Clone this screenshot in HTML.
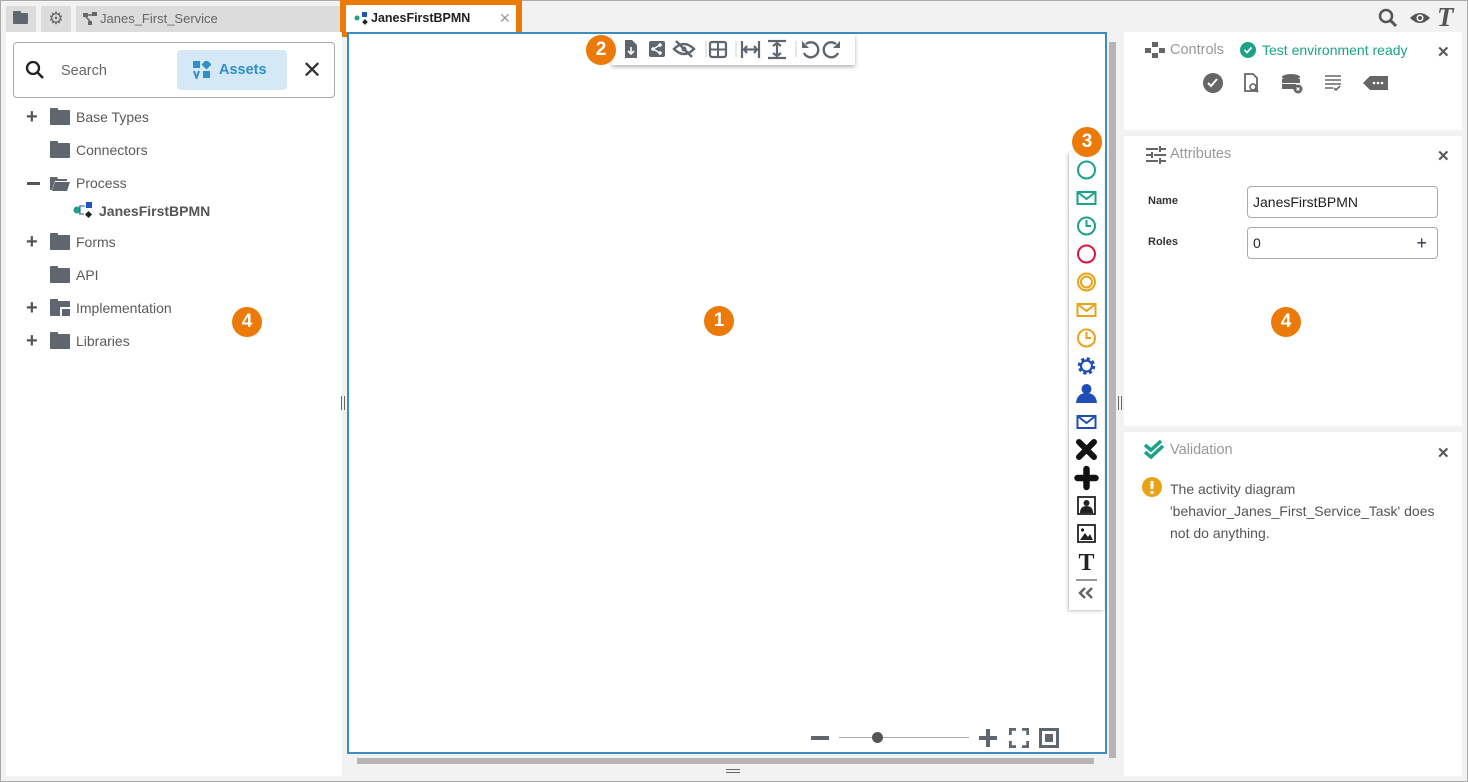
<!DOCTYPE html>
<html><head><meta charset="utf-8"><style>
*{box-sizing:border-box;margin:0;padding:0}
body{width:1468px;height:782px;overflow:hidden;background:#f2f2f2;font-family:"Liberation Sans",Arial,sans-serif;position:relative;color:#555}
.a{position:absolute}
.frame{left:0;top:0;width:1468px;height:782px;border:1px solid #aaa}
.badge{position:absolute;width:30px;height:30px;border-radius:50%;background:#ec7a08;color:#fff;font-weight:bold;font-size:19px;text-align:center;line-height:30px}
.tree{font-size:14px;color:#5a5a5a}
.row{position:absolute;left:0;height:20px;line-height:20px}
.fold{position:absolute;width:20px;height:15px;background:#5f6670;border-radius:1px}
.fold:before{content:"";position:absolute;left:0;top:-2px;width:8px;height:3px;background:#5f6670;border-radius:1px 1px 0 0}
.plus{position:absolute;font-size:20px;color:#555;font-weight:bold;line-height:20px}
.x{position:absolute;font-size:15px;color:#555;font-weight:bold}
</style></head><body>
<div class="a frame"></div>
<div class="a" style="left:6px;top:6px;width:30px;height:26px;background:#dcdcdc"></div>
<div class="fold" style="left:13px;top:13px;width:15px;height:11px"></div>
<div class="a" style="left:41px;top:6px;width:30px;height:26px;background:#dcdcdc;text-align:center;line-height:26px;font-size:17px;color:#666">⚙</div>
<div class="a" style="left:76px;top:6px;width:265px;height:26px;background:#dcdcdc;font-size:13px;line-height:26px;padding-left:24px;color:#666">Janes_First_Service</div>
<svg class="a" style="left:83px;top:12px" width="14" height="14"><rect x="0" y="1" width="5" height="4" fill="#666"/><rect x="9" y="0" width="5" height="4" fill="#666"/><rect x="5" y="9" width="4" height="4" fill="#666"/><path d="M5 3H9M3 5L7 9" stroke="#666" stroke-width="1.5"/></svg>
<div class="a" style="left:340px;top:0;width:182px;height:37px;background:#ec7a08"></div>
<div class="a" style="left:346px;top:5px;width:170px;height:27px;background:#fff;font-size:12.5px;font-weight:bold;color:#222;line-height:27px;padding-left:25px">JanesFirstBPMN</div>
<svg class="a" style="left:354px;top:12px" width="14" height="13"><circle cx="3" cy="6" r="2.5" fill="#1aa386"/><rect x="8" y="0" width="5" height="5" fill="#2255bb"/><rect x="9" y="8" width="4" height="4" fill="#222" transform="rotate(45 11 10)"/></svg>
<div class="a" style="left:499px;top:10px;font-size:14px;color:#999">✕</div>
<svg class="a" style="left:1378px;top:8px" width="22" height="20"><circle cx="8" cy="8" r="6" fill="none" stroke="#555" stroke-width="2.5"/><path d="M12 12L18 18" stroke="#555" stroke-width="3"/></svg>
<svg class="a" style="left:1409px;top:10px" width="22" height="16"><path d="M1 8Q11 -2 21 8Q11 18 1 8Z" fill="#555"/><circle cx="11" cy="8" r="3.5" fill="#fff"/><circle cx="11" cy="8" r="2" fill="#555"/></svg>
<div class="a" style="left:1437px;top:2px;font-family:'Liberation Serif',serif;font-style:italic;font-weight:bold;font-size:27px;color:#555">T</div>
<div class="a" style="left:6px;top:32px;width:336px;height:744px;background:#fff"></div>
<div class="a" style="left:13px;top:42px;width:322px;height:56px;border:1px solid #aaa;border-radius:4px;background:#fff"></div>
<svg class="a" style="left:25px;top:60px" width="22" height="22"><circle cx="8" cy="8" r="6" fill="none" stroke="#222" stroke-width="2.3"/><path d="M12.5 12.5L18 18" stroke="#222" stroke-width="2.5"/></svg>
<div class="a" style="left:61px;top:63px;font-size:14.5px;color:#666">Search</div>
<div class="a" style="left:177px;top:50px;width:110px;height:40px;background:#d4e9f5;border-radius:4px;color:#2f8fc6;font-size:14.5px;font-weight:bold;line-height:40px;padding-left:42px">Assets</div>
<svg class="a" style="left:193px;top:61px" width="18" height="18"><rect x="0" y="0" width="7" height="7" fill="#2f8fc6"/><rect x="10" y="0" width="7" height="7" fill="#2f8fc6" transform="rotate(45 13.5 3.5)"/><rect x="10" y="10" width="7" height="7" fill="#2f8fc6"/><path d="M1 10L3.5 17L6 10" stroke="#2f8fc6" stroke-width="2" fill="none"/></svg>
<div class="a" style="left:302px;top:56px;font-size:24px;color:#333">✕</div>
<div class="tree">
<div class="plus" style="left:26px;top:107px">+</div><div class="fold" style="left:50px;top:110px"></div><div class="row" style="left:76px;top:107px">Base Types</div>
<div class="fold" style="left:50px;top:143px"></div><div class="row" style="left:76px;top:140px">Connectors</div>
<div class="a" style="left:27px;top:182px;width:13px;height:2.5px;background:#555"></div>
<svg class="a" style="left:50px;top:175px" width="20" height="16"><path d="M0 2H7L8 4H17V6H5L2 15H0Z" fill="#5f6670"/><path d="M5 7H20L17 16H2Z" fill="#5f6670"/></svg>
<div class="row" style="left:76px;top:173px">Process</div>
<svg class="a" style="left:73px;top:201px" width="20" height="18"><circle cx="4" cy="9" r="3.5" fill="#1aa386"/><rect x="13" y="1" width="6" height="6" fill="#2255bb"/><rect x="13" y="11" width="5" height="5" fill="#222" transform="rotate(45 15.5 13.5)"/><path d="M6 5H12M6 13H11M7 5V13" stroke="#2255bb" stroke-width="1"/></svg>
<div class="row" style="left:99px;top:201px;font-weight:bold;color:#555">JanesFirstBPMN</div>
<div class="plus" style="left:26px;top:232px">+</div><div class="fold" style="left:50px;top:235px"></div><div class="row" style="left:76px;top:232px">Forms</div>
<div class="fold" style="left:50px;top:268px"></div><div class="row" style="left:76px;top:265px">API</div>
<div class="plus" style="left:26px;top:298px">+</div><div class="fold" style="left:50px;top:301px"></div><div class="a" style="left:60px;top:307px;width:10px;height:9px;background:#fff"></div><div class="a" style="left:62px;top:309px;width:8px;height:7px;background:#5f6670"></div><div class="row" style="left:76px;top:298px">Implementation</div>
<div class="plus" style="left:26px;top:331px">+</div><div class="fold" style="left:50px;top:334px"></div><div class="row" style="left:76px;top:331px">Libraries</div>
</div>
<div class="badge" style="left:232px;top:307px">4</div>
<div class="a" style="left:341px;top:396px;width:4px;height:14px;border-left:1.5px solid #666;border-right:1.5px solid #666"></div>
<div class="a" style="left:347px;top:32px;width:760px;height:722px;border:2px solid #3a8fc0;background:#fff"></div>
<div class="badge" style="left:704px;top:306px">1</div>
<div class="a" style="left:612px;top:34px;width:243px;height:31px;background:#fff;box-shadow:0 2px 4px rgba(0,0,0,.3)"></div>
<div class="badge" style="left:586px;top:35px">2</div>
<svg class="a" style="left:620px;top:38px" width="232" height="24" fill="#5f6670" stroke="#5f6670">
<path d="M5 2H12L17 7V20H5Z" stroke="none"/><path d="M11 9V16M8 13L11 16L14 13" stroke="#fff" stroke-width="1.6" fill="none"/>
<rect x="29" y="3" width="16" height="16" rx="2" stroke="none"/><circle cx="33" cy="11" r="1.8" fill="#fff" stroke="none"/><circle cx="40" cy="7" r="1.8" fill="#fff" stroke="none"/><circle cx="40" cy="15" r="1.8" fill="#fff" stroke="none"/><path d="M33 11L40 7M33 11L40 15" stroke="#fff" stroke-width="1.3"/>
<path d="M54 11Q64 1 74 11Q64 21 54 11Z" fill="none" stroke-width="2.4"/><circle cx="64" cy="11" r="2.5" stroke="none"/><path d="M56 3L72 19" stroke-width="2.4"/>
<line x1="86" y1="3" x2="86" y2="19" stroke="#ccc"/>
<rect x="90" y="4" width="16" height="15" rx="2" fill="none" stroke-width="2.2"/><path d="M98 4V19M90 11.5H106" stroke-width="2"/>
<line x1="116" y1="3" x2="116" y2="19" stroke="#ccc"/>
<path d="M122 3V20M139 3V20M124 11.5H137M127 8L124 11.5L127 15M134 8L137 11.5L134 15" stroke-width="2.2" fill="none"/>
<path d="M148 3H166M148 20H166M157 5V18M153 8L157 5L161 8M153 15L157 18L161 15" stroke-width="2.2" fill="none"/>
<line x1="176" y1="3" x2="176" y2="19" stroke="#ccc"/>
<path d="M186 6A7.5 7.5 0 1 1 184 15" fill="none" stroke-width="2.4"/><path d="M182 3V10H189Z" stroke="none"/>
<path d="M216 6A7.5 7.5 0 1 0 218 15" fill="none" stroke-width="2.4"/><path d="M220 3V10H213Z" stroke="none"/>
</svg>
<div class="a" style="left:1069px;top:152px;width:35px;height:458px;background:#fff;box-shadow:-1px 1px 3px rgba(0,0,0,.25)"></div>
<div class="badge" style="left:1072px;top:127px">3</div>
<svg class="a" style="left:1069px;top:155px" width="35" height="455">
<circle cx="17.5" cy="15" r="8.5" fill="none" stroke="#1aa386" stroke-width="2"/>
<rect x="8.5" y="37" width="18" height="12" fill="none" stroke="#1aa386" stroke-width="2"/><path d="M8.5 37L17.5 44L26.5 37" fill="none" stroke="#1aa386" stroke-width="2"/>
<circle cx="17.5" cy="71" r="8.5" fill="none" stroke="#1aa386" stroke-width="2"/><path d="M17.5 65V71H22" fill="none" stroke="#1aa386" stroke-width="2"/>
<circle cx="17.5" cy="99" r="8.5" fill="none" stroke="#e0123f" stroke-width="2"/>
<circle cx="17.5" cy="127" r="8.5" fill="none" stroke="#e8a317" stroke-width="2"/><circle cx="17.5" cy="127" r="5.5" fill="none" stroke="#e8a317" stroke-width="2"/>
<rect x="8.5" y="149" width="18" height="12" fill="none" stroke="#e8a317" stroke-width="2"/><path d="M8.5 149L17.5 156L26.5 149" fill="none" stroke="#e8a317" stroke-width="2"/>
<circle cx="17.5" cy="183" r="8.5" fill="none" stroke="#e8a317" stroke-width="2"/><path d="M17.5 177V183H22" fill="none" stroke="#e8a317" stroke-width="2"/>
<circle cx="17.5" cy="211" r="7" fill="none" stroke="#1f4fb5" stroke-width="3.5" stroke-dasharray="3 2.5"/><circle cx="17.5" cy="211" r="5.5" fill="none" stroke="#1f4fb5" stroke-width="2.2"/>
<circle cx="17.5" cy="234" r="5" fill="#1f4fb5"/><path d="M7 248Q8 238 17.5 238Q27 238 28 248Z" fill="#1f4fb5"/>
<rect x="8.5" y="261" width="18" height="12" fill="none" stroke="#1f4fb5" stroke-width="2"/><path d="M8.5 261L17.5 268L26.5 261" fill="none" stroke="#1f4fb5" stroke-width="2"/>
<path d="M10 287L25 302M25 287L10 302" stroke="#111" stroke-width="6" stroke-linecap="round"/>
<path d="M17.5 314V332M8.5 323H26.5" stroke="#111" stroke-width="6.5" stroke-linecap="round"/>
<rect x="9" y="342" width="17" height="17" fill="none" stroke="#222" stroke-width="1.8"/><circle cx="17.5" cy="348" r="3" fill="#222"/><path d="M11 358Q11 351 17.5 351Q24 351 24 358Z" fill="#222"/>
<rect x="9" y="370" width="17" height="17" fill="none" stroke="#222" stroke-width="1.8"/><circle cx="13.5" cy="375" r="1.6" fill="#222"/><path d="M11 385L16 378L19 382L21 379L24 385Z" fill="#222"/>
<text x="17.5" y="415" text-anchor="middle" font-family="Liberation Serif" font-weight="bold" font-size="24" fill="#222">T</text>
<line x1="7" y1="425" x2="28" y2="425" stroke="#333"/>
<path d="M16 433L11 438L16 443M23 433L18 438L23 443" fill="none" stroke="#666" stroke-width="2.5"/>
</svg>
<div class="a" style="left:811px;top:736px;width:18px;height:4px;background:#5f6670"></div>
<div class="a" style="left:839px;top:737px;width:130px;height:1px;background:#aaa"></div>
<div class="a" style="left:872px;top:732px;width:11px;height:11px;border-radius:50%;background:#555"></div>
<div class="a" style="left:979px;top:736px;width:18px;height:4px;background:#5f6670"></div>
<div class="a" style="left:986px;top:729px;width:4px;height:18px;background:#5f6670"></div>
<svg class="a" style="left:1009px;top:728px" width="20" height="20" fill="none" stroke="#5f6670" stroke-width="3.5"><path d="M1 7V1H7M13 1H19V7M19 13V19H13M7 19H1V13"/></svg>
<svg class="a" style="left:1039px;top:728px" width="20" height="20"><rect x="1.5" y="1.5" width="17" height="17" fill="none" stroke="#5f6670" stroke-width="3"/><rect x="6" y="6" width="8" height="8" fill="#5f6670"/></svg>
<div class="a" style="left:1109px;top:42px;width:7px;height:716px;background:#b8b4b6"></div>
<div class="a" style="left:357px;top:758px;width:737px;height:6px;background:#b8b4b6"></div>
<div class="a" style="left:726px;top:769px;width:14px;height:4px;border-top:1.5px solid #666;border-bottom:1.5px solid #666"></div>
<div class="a" style="left:1118px;top:396px;width:4px;height:14px;border-left:1.5px solid #666;border-right:1.5px solid #666"></div>
<div class="a" style="left:1124px;top:32px;width:338px;height:98px;background:#fff"></div>
<div class="a" style="left:1124px;top:136px;width:338px;height:290px;background:#fff"></div>
<div class="a" style="left:1124px;top:432px;width:338px;height:344px;background:#fff"></div>
<svg class="a" style="left:1145px;top:42px" width="20" height="16" fill="#666"><rect x="7" y="0" width="6" height="5"/><rect x="0" y="6" width="6" height="5"/><rect x="14" y="6" width="6" height="5"/><rect x="7" y="11" width="6" height="5"/></svg>
<div class="a" style="left:1170px;top:42px;font-size:14.5px;color:#999">Controls</div>
<svg class="a" style="left:1240px;top:42px" width="16" height="16"><circle cx="8" cy="8" r="8" fill="#1aa386"/><path d="M4.5 8L7 10.5L11.5 5.5" stroke="#fff" stroke-width="1.8" fill="none"/></svg>
<div class="a" style="left:1262px;top:42px;font-size:14px;color:#1aa386">Test environment ready</div>
<div class="x" style="left:1437px;top:43px">✕</div>
<svg class="a" style="left:1200px;top:72px" width="190" height="24" fill="#666">
<circle cx="13" cy="11" r="10"/><path d="M8 11L11 14L17 7" stroke="#fff" stroke-width="2" fill="none"/>
<path d="M45 2H53L57 6V19H45Z" fill="none" stroke="#666" stroke-width="1.8"/><circle cx="53" cy="15" r="3" fill="none" stroke="#666" stroke-width="1.6"/><path d="M55 17L58 20" stroke="#666" stroke-width="2"/>
<ellipse cx="91" cy="5" rx="9" ry="3"/><rect x="82" y="7" width="18" height="4"/><rect x="82" y="12" width="14" height="5"/><circle cx="98" cy="17" r="4.5"/><path d="M96.5 15.5L99.5 18.5M99.5 15.5L96.5 18.5" stroke="#fff" stroke-width="1.2"/>
<path d="M125 4H141M125 8H141M125 12H141M125 16H133M134 16L136 18L140 14" stroke="#666" stroke-width="1.6" fill="none"/>
<path d="M163 11L170 4H188V18H170Z"/><circle cx="174" cy="11" r="1.3" fill="#fff"/><circle cx="178" cy="11" r="1.3" fill="#fff"/><circle cx="182" cy="11" r="1.3" fill="#fff"/>
</svg>
<svg class="a" style="left:1146px;top:146px" width="20" height="18" stroke="#666" stroke-width="2"><path d="M0 3H12M15 3H20M14 0V6M0 9H5M8 9H20M6 6V12M0 15H12M15 15H20M14 12V18"/></svg>
<div class="a" style="left:1170px;top:146px;font-size:14.5px;color:#999">Attributes</div>
<div class="x" style="left:1437px;top:147px">✕</div>
<div class="a" style="left:1148px;top:195px;font-size:11px;font-weight:bold;color:#333">Name</div>
<div class="a" style="left:1247px;top:186px;width:191px;height:32px;border:1px solid #aaa;border-radius:4px;font-size:14px;color:#222;line-height:30px;padding-left:5px">JanesFirstBPMN</div>
<div class="a" style="left:1148px;top:236px;font-size:11px;font-weight:bold;color:#333">Roles</div>
<div class="a" style="left:1247px;top:227px;width:191px;height:32px;border:1px solid #aaa;border-radius:4px;font-size:14px;color:#222;line-height:30px;padding-left:5px">0<span style="position:absolute;right:10px;color:#334;font-size:18px">+</span></div>
<div class="badge" style="left:1271px;top:307px">4</div>
<svg class="a" style="left:1143px;top:440px" width="22" height="20" fill="none" stroke="#1aa386" stroke-width="3.5"><path d="M2 5L8 10L18 1M2 12L8 17L20 6"/></svg>
<div class="a" style="left:1170px;top:442px;font-size:14.5px;color:#999">Validation</div>
<div class="x" style="left:1437px;top:444px">✕</div>
<svg class="a" style="left:1142px;top:477px" width="20" height="20"><circle cx="10" cy="10" r="10" fill="#e8a317"/><rect x="8.5" y="4" width="3" height="8" fill="#fff"/><rect x="8.5" y="14" width="3" height="3" fill="#fff"/></svg>
<div class="a" style="left:1170px;top:478px;font-size:14px;color:#555;line-height:22px;width:285px">The activity diagram 'behavior_Janes_First_Service_Task' does not do anything.</div>
</body></html>
